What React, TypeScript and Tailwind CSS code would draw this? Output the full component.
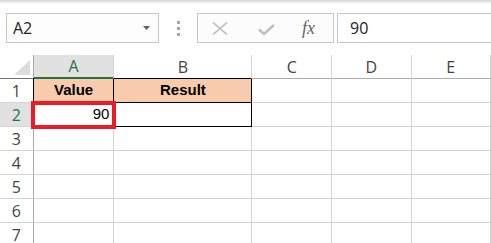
import React from "react";

const cols = [
  { l: "A", w: "w-[81px]" },
  { l: "B", w: "w-[139px]" },
  { l: "C", w: "w-[80px]" },
  { l: "D", w: "w-[80px]" },
  { l: "E", w: "w-[80px]" },
];

export default function App() {
  const rows = [1, 2, 3, 4, 5, 6, 7];
  return (
    <div className="relative w-[491px] h-[243px] overflow-hidden bg-white font-['Liberation_Sans',Arial,sans-serif]">
      <div className="h-[4px] bg-gradient-to-b from-[#d6d6d6] to-white" />
      {/* formula bar */}
      <div className="flex items-stretch h-[30px] mt-[9px] pl-[6px]">
        <div className="flex items-center justify-between w-[153px] border border-[#c6c6c6] bg-[#fdfdfd] pl-[6px] pr-[8px]">
          <span className="text-[16px] text-[#222] font-['Open_Sans',sans-serif]">A2</span>
          <svg width="7" height="4" viewBox="0 0 7 4"><path d="M0 0H7L3.5 4Z" fill="#606060" /></svg>
        </div>
        <div className="w-[38px] flex flex-col items-center justify-center gap-[3px]">
          <div className="w-[3px] h-[3px] bg-[#a6a6a6]" />
          <div className="w-[3px] h-[3px] bg-[#a6a6a6]" />
          <div className="w-[3px] h-[3px] bg-[#a6a6a6]" />
        </div>
        <div className="flex items-center w-[137px] border border-[#c6c6c6] bg-[#fcfcfc]">
          <svg className="ml-[14px]" width="16" height="13" viewBox="0 0 16 13">
            <path d="M1 0.5L15 12.5M15 0.5L1 12.5" stroke="#bcbcbc" strokeWidth="1.6" />
          </svg>
          <svg className="ml-[30px] mt-[3px]" width="17" height="11" viewBox="0 0 17 11">
            <path d="M1 5.5L6 10L16 1" stroke="#c0c0c0" strokeWidth="2.6" fill="none" />
          </svg>
          <span className="ml-[27px] text-[18px] italic text-[#666] font-['Liberation_Serif',serif] leading-none">fx</span>
        </div>
        <div className="flex-1 ml-[3px] border border-[#c6c6c6] border-r-0 bg-white flex items-center pl-[12px]">
          <span className="text-[16px] text-[#222] font-['Open_Sans',sans-serif]">90</span>
        </div>
      </div>
      {/* grid */}
      <div className="mt-[12px]">
        <div className="flex h-[24px]">
          <div className="relative w-[34px] border-r border-[#ababab] border-b border-b-[#6f6f6f]">
            <svg className="absolute right-[3px] bottom-[3px]" width="16" height="15" viewBox="0 0 16 15">
              <path d="M16 0V15H0Z" fill="#dcdcdc" />
            </svg>
          </div>
          {cols.map((c, i) => (
            <div
              key={c.l}
              className={
                c.w +
                " flex items-center justify-center border-r border-[#d4d4d4] text-[16px] font-['Open_Sans',sans-serif] " +
                (i === 0
                  ? "bg-[#e1e1e1] text-[#217346] border-b-2 border-b-[#217346]"
                  : "text-[#444] border-b " + (i === 1 ? "border-b-black" : "border-b-[#ababab]"))
              }
            >
              {c.l}
            </div>
          ))}
        </div>
        {rows.map((r) => (
          <div key={r} className="flex h-[24px]">
            <div
              className={
                "w-[34px] flex items-center justify-center border-r border-b border-r-[#ababab] border-b-[#d4d4d4] text-[16px] font-['Open_Sans',sans-serif] " +
                (r === 2 ? "bg-[#e1e1e1] text-[#217346]" : "text-[#444]")
              }
            >
              {r}
            </div>
            {cols.map((c, i) => {
              const inBox = r <= 2 && i <= 1;
              let cls =
                c.w +
                " flex items-center border-r border-b text-[15px] text-black " +
                (inBox ? "border-r-black border-b-black " : "border-r-[#d4d4d4] border-b-[#d4d4d4] ");
              if (r === 1 && inBox) cls += "bg-[#f8cbad] justify-center font-bold ";
              if (r === 2 && i === 0) cls += "justify-end pr-[4px] ";
              let content = "";
              if (r === 1 && i === 0) content = "Value";
              if (r === 1 && i === 1) content = "Result";
              if (r === 2 && i === 0) content = "90";
              return (
                <div key={c.l} className={cls}>
                  {content}
                </div>
              );
            })}
          </div>
        ))}
      </div>
      <div className="absolute left-[33px] top-[78px] w-px h-[49px] bg-black" />
      <div className="absolute left-[31px] top-[101px] w-[85px] h-[28px] border-[4px] border-[#ec1c24]" />
    </div>
  );
}
